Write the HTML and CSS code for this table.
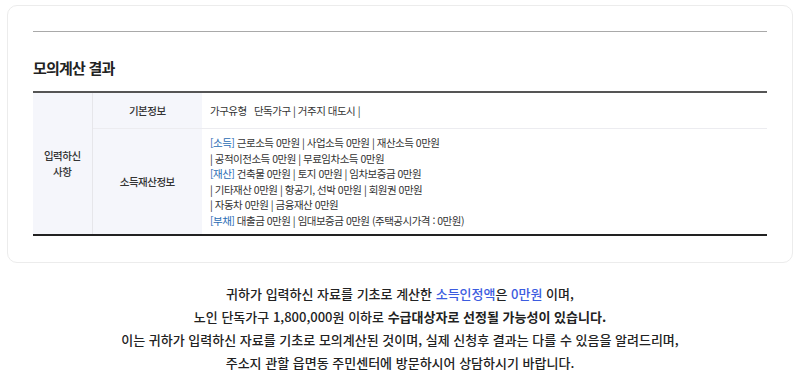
FILE: index.html
```html
<!DOCTYPE html>
<html lang="ko">
<head>
<meta charset="utf-8">
<link rel="stylesheet" href="styles.css">
</head>
<body>
<div class="card">
  <div class="topline"></div>
  <h2 class="title">모의계산 결과</h2>
  <table class="result">
    <colgroup>
      <col class="c1">
      <col class="c2">
      <col>
    </colgroup>
    <tr>
      <th class="group" rowspan="2">입력하신<br>사항</th>
      <th class="sub row1">기본정보</th>
      <td class="val row1">가구유형&nbsp;&nbsp; 단독가구 | 거주지 대도시 |</td>
    </tr>
    <tr>
      <th class="sub">소득재산정보</th>
      <td class="val multi"><span class="tag">[소득]</span> 근로소득 0만원 | 사업소득 0만원 | 재산소득 0만원<br>| 공적이전소득 0만원 | 무료임차소득 0만원<br><span class="tag">[재산]</span> 건축물 0만원 | 토지 0만원 | 임차보증금 0만원<br>| 기타재산 0만원 | 항공기, 선박 0만원 | 회원권 0만원<br>| 자동차 0만원 | 금융재산 0만원<br><span class="tag">[부채]</span> 대출금 0만원 | 임대보증금 0만원 (주택공시가격 : 0만원)</td>
    </tr>
  </table>
</div>
<div class="notice">
  <p>귀하가 입력하신 자료를 기초로 계산한 <span class="hl">소득인정액</span>은 <span class="hl">0만원</span> 이며,</p>
  <p>노인 단독가구 1,800,000원 이하로 <strong>수급대상자로 선정될 가능성이 있습니다.</strong></p>
  <p>이는 귀하가 입력하신 자료를 기초로 모의계산된 것이며, 실제 신청후 결과는 다를 수 있음을 알려드리며,</p>
  <p>주소지 관할 읍면동 주민센터에 방문하시어 상담하시기 바랍니다.</p>
</div>
</body>
</html>
```
FILE: styles.css
```css
html, body {
  margin: 0;
  padding: 0;
  background: #fff;
}
body {
  font-family: "Noto Sans CJK KR", "Noto Sans", sans-serif;
  color: #333;
  padding: 5px 7px 0;
}
.card {
  border: 1px solid #ececec;
  border-radius: 10px;
  padding: 25px 25px 26px;
}
.topline {
  height: 1px;
  background: #a9a9a9;
}
.title {
  margin: 0;
  padding: 25px 0 12px;
  font-size: 15px;
  line-height: 22px;
  letter-spacing: -0.8px;
  font-weight: 700;
  color: #222;
}
.result {
  width: 100%;
  table-layout: fixed;
  border-collapse: collapse;
  border-top: 2px solid #555;
  border-bottom: 2px solid #222;
  font-size: 10.5px;
  letter-spacing: -0.5px;
}
.c1 {
  width: 59px;
}
.c2 {
  width: 110px;
}
.result th {
  background: #f5f6fb;
  font-weight: 500;
  color: #333;
  text-align: center;
  line-height: 15.5px;
}
.group {
  border-right: 1px solid #e6e6ea;
}
.row1 {
  height: 33px;
  border-bottom: 1px solid #ececf0;
}
.val {
  text-align: left;
  padding: 0 8px;
  color: #333;
  line-height: 15.5px;
}
.multi {
  padding-top: 6px;
  padding-bottom: 6px;
}
.tag {
  color: #2a6cb4;
}
.notice {
  margin-top: 19px;
  text-align: center;
  font-size: 13px;
  font-weight: 500;
  color: #222;
}
.notice p {
  margin: 0;
  line-height: 23px;
}
.notice strong {
  font-weight: 700;
}
.hl {
  color: #3c5ce0;
}
```
